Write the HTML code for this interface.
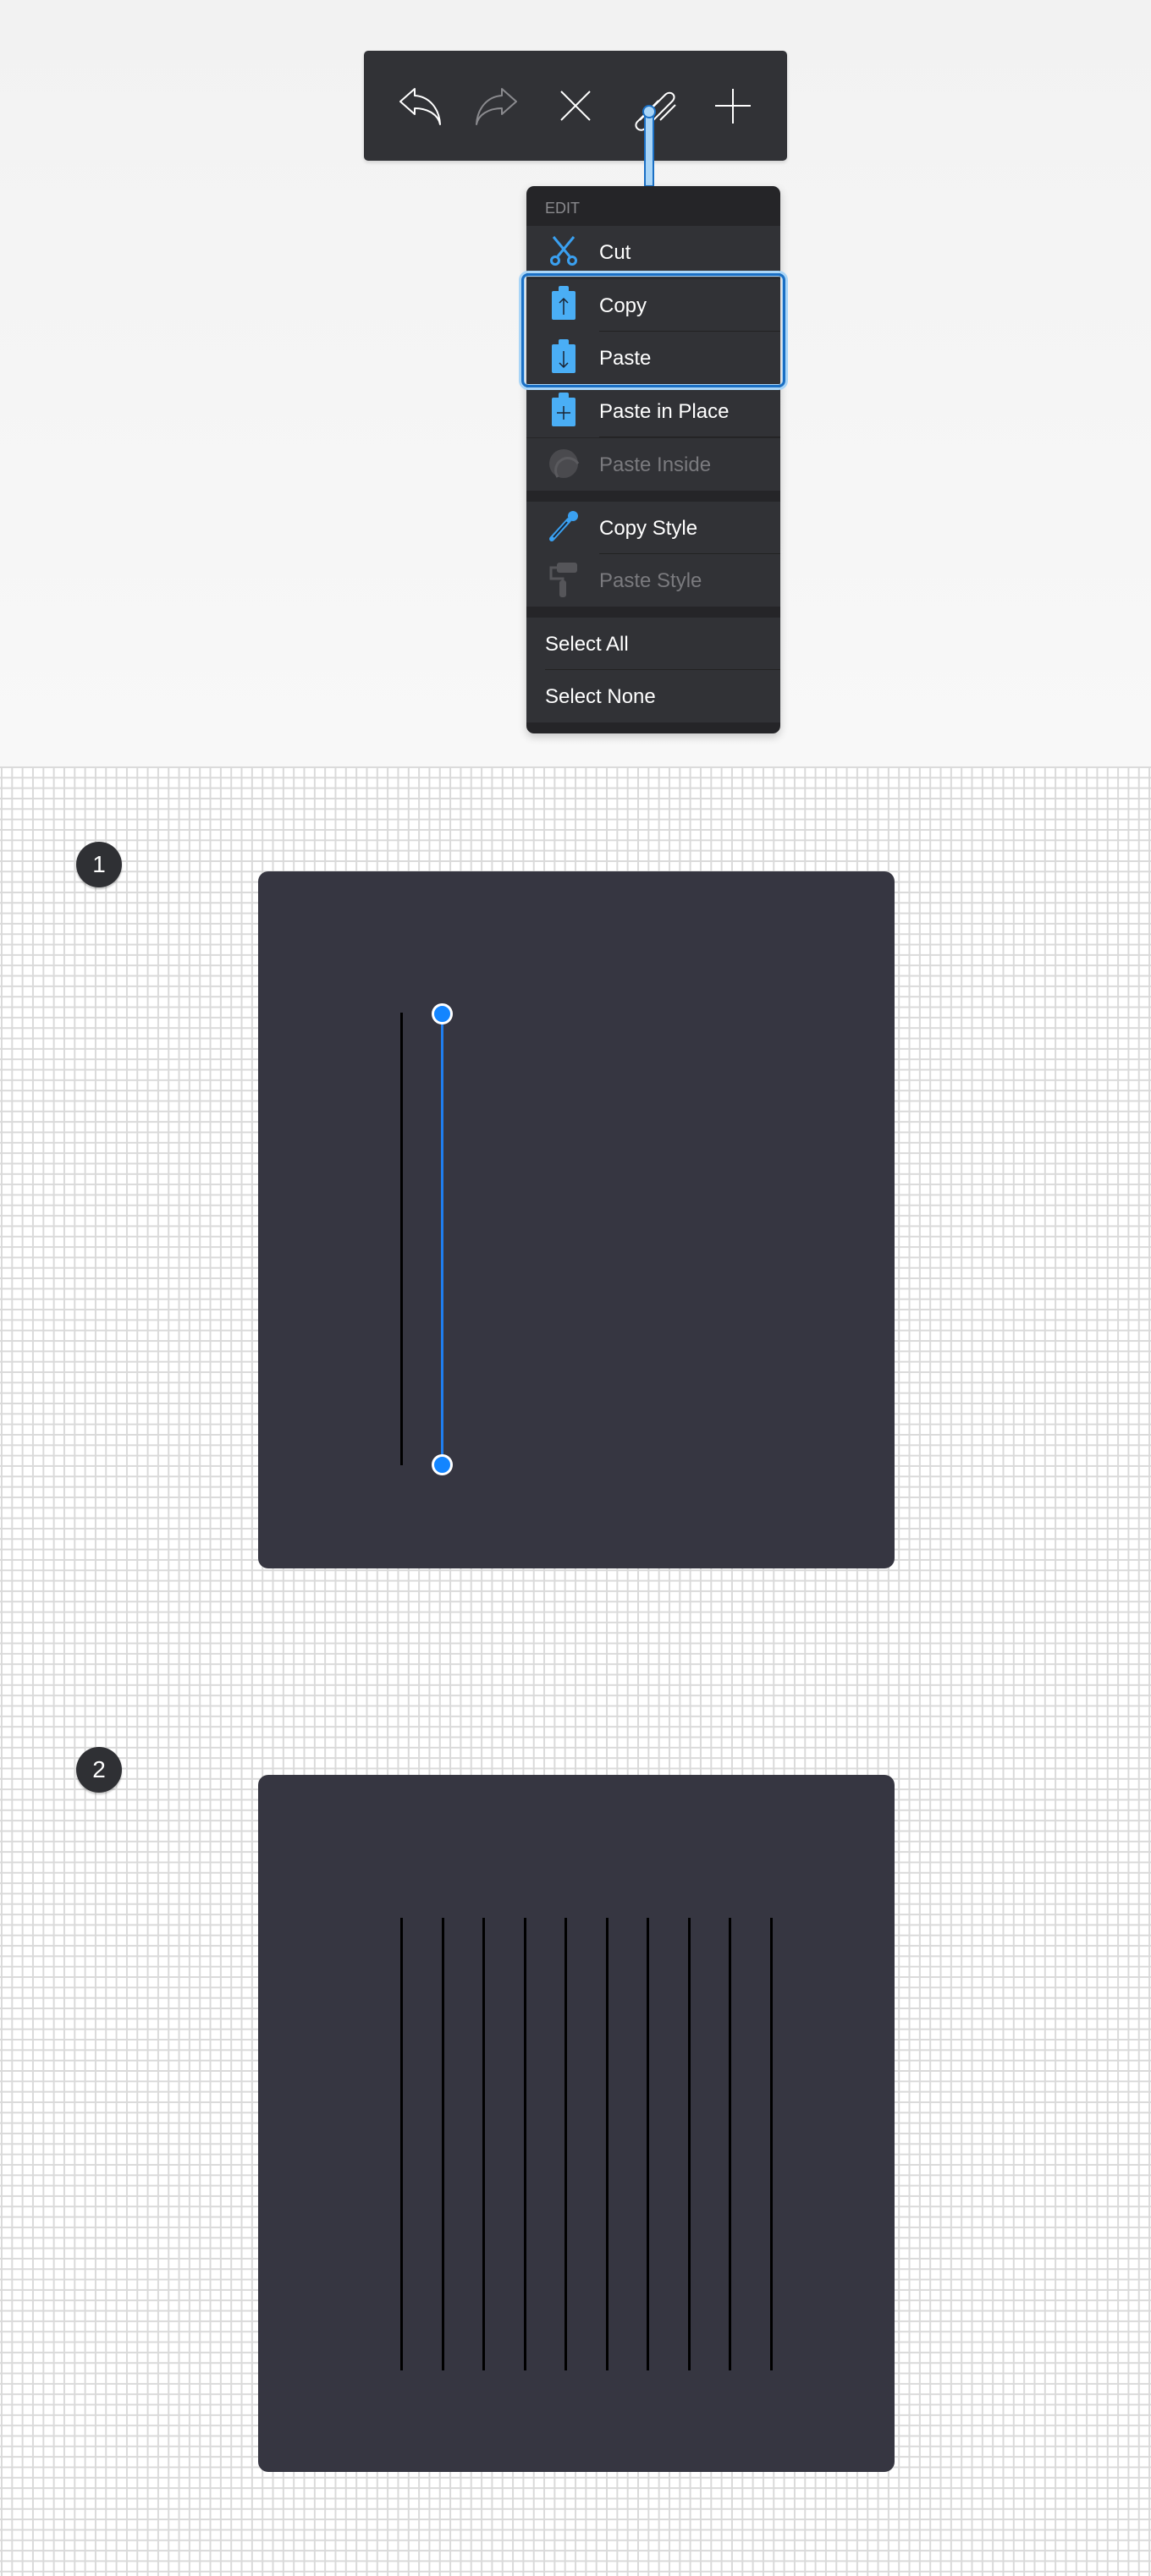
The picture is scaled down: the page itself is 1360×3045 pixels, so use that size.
<!DOCTYPE html>
<html><head><meta charset="utf-8"><style>
*{margin:0;padding:0;box-sizing:border-box}
body{width:1360px;height:3045px;position:relative;overflow:hidden;font-family:"Liberation Sans",sans-serif;background:#f4f4f4}
.top{position:absolute;left:0;top:0;width:1360px;height:906px;background:linear-gradient(#f2f2f2,#f8f8f8)}
.grid{position:absolute;left:0;top:906px;width:1360px;height:2139px;background-color:#fff;
background-image:linear-gradient(90deg,#dadada 2px,transparent 2px),linear-gradient(#dadada 2px,transparent 2px);
background-size:12.33px 12.33px;background-position:1px 0}
.tb{position:absolute;left:430px;top:60px;width:500px;height:130px;background:#313236;border-radius:5px;box-shadow:0 2px 4px rgba(0,0,0,.15)}
.menu{position:absolute;left:622px;top:220px;width:300px;height:647px;background:#252528;border-radius:9px;overflow:hidden;box-shadow:0 4px 10px rgba(0,0,0,.2)}
.hd{height:47px;color:#8a8a8e;font-size:18px;padding:16px 0 0 22px}
.row{position:absolute;left:0;width:300px;height:62px;background:#313236;color:#fff;font-size:24px}
.row span{position:absolute;left:86px;top:18px}
.row.dim{color:#7a7a7e}
.row .ln{position:absolute;left:86px;right:0;bottom:0;height:1px;background:#222}
.row.s span{left:22px}.row.s .ln{left:22px}
.hl{position:absolute;left:616px;top:323px;width:312px;height:135px;border:3px solid #1a6fc4;border-radius:8px;box-shadow:0 0 0 3px #a9d5f7,inset 0 0 0 1px #a9d5f7}
.badge{position:absolute;width:54px;height:54px;border-radius:50%;background:#2f3034;color:#fff;font-size:28px;text-align:center;line-height:54px;box-shadow:0 2px 2px rgba(0,0,0,.25)}
.card{position:absolute;left:305px;width:752px;height:824px;background:#363641;border-radius:12px}
.bl{position:absolute;width:3px;background:#000}
</style></head><body>
<div class="top"></div>
<div class="grid"></div>

<div class="tb"></div>
<svg style="position:absolute;left:430px;top:60px" width="500" height="130" viewBox="0 0 500 130" fill="none">
<path d="M60 45 L43 60 L60 75 L60 68 C76 68 88 76 90 87 C89 68 77 54 60 53 Z" stroke="#fff" stroke-width="2" stroke-linejoin="round"/>
<path d="M163 45 L180 60 L163 75 L163 68 C147 68 135 76 133 87 C134 68 146 54 163 53 Z" stroke="#8a8a8e" stroke-width="2" stroke-linejoin="round"/>
<path d="M233 48 L267 82 M267 48 L233 82" stroke="#fff" stroke-width="2"/>
<path d="M326 82 L356 52 C362 46 371 53 364 60 L332 92 C326 97 318 90 323 84 L348 59" stroke="#fff" stroke-width="2"/>
<path d="M368 64 L350 82" stroke="#fff" stroke-width="2"/>
<path d="M415 65 L457 65 M436 45 L436 86" stroke="#fff" stroke-width="2"/>
</svg>
<div style="position:absolute;left:761px;top:133px;width:12px;height:88px;background:#a9d5f7;border:2px solid #1a6fc4;border-top:none"></div>
<div style="position:absolute;left:759px;top:124px;width:16px;height:16px;border-radius:50%;background:#a9d5f7;border:2px solid #1a6fc4"></div>

<div class="menu">
<div class="hd">EDIT</div>
<div class="row" style="top:47px"><span>Cut</span></div>
<div class="row" style="top:110px"><span>Copy</span><div class="ln"></div></div>
<div class="row" style="top:172px"><span>Paste</span></div>
<div class="row" style="top:235px"><span>Paste in Place</span><div class="ln"></div></div>
<div class="row dim" style="top:298px"><span>Paste Inside</span></div>
<div class="row" style="top:373px"><span>Copy Style</span><div class="ln"></div></div>
<div class="row dim" style="top:435px"><span>Paste Style</span></div>
<div class="row s" style="top:510px"><span>Select All</span><div class="ln"></div></div>
<div class="row s" style="top:572px"><span>Select None</span></div>
<svg style="position:absolute;left:0;top:0" width="300" height="647" fill="none">
<g stroke="#3aa0f0" stroke-width="3"><path d="M32 60 L51 83 M56 60 L37 83"/><circle cx="34" cy="88" r="4.5"/><circle cx="54" cy="88" r="4.5"/></g>
<g fill="#4aaef5"><rect x="30" y="124" width="28" height="34" rx="2"/><rect x="38" y="118" width="12" height="8" rx="2"/>
<rect x="30" y="187" width="28" height="34" rx="2"/><rect x="38" y="181" width="12" height="8" rx="2"/>
<rect x="30" y="250" width="28" height="34" rx="2"/><rect x="38" y="244" width="12" height="8" rx="2"/></g>
<g stroke="#1a2433" stroke-width="1.5"><path d="M44 152 V133 M39 138 L44 133 L49 138"/><path d="M44 195 V214 M39 209 L44 214 L49 209"/><path d="M36 268 H52 M44 260 V276"/></g>
<circle cx="44" cy="328" r="17" fill="#4a4a4e"/><path d="M37 344 A14 14 0 0 1 61 328" stroke="#5a5a5e" stroke-width="3"/>
<path d="M30 417 L50 395" stroke="#3aa0f0" stroke-width="6" stroke-linecap="round"/><path d="M32 415 L48 397" stroke="#1a2433" stroke-width="2"/><circle cx="55" cy="390" r="6" fill="#3aa0f0"/>
<rect x="36" y="445" width="24" height="12" rx="3" fill="#555559"/><path d="M36 451 H29 V464 H43 V478" stroke="#555559" stroke-width="3"/><rect x="39" y="466" width="8" height="20" rx="3" fill="#555559"/>
</svg>
</div>
<div class="hl"></div>

<div class="badge" style="left:90px;top:995px">1</div>
<div class="card" style="top:1030px"></div>
<div class="bl" style="left:473px;top:1197px;height:535px"></div>
<div style="position:absolute;left:521px;top:1198px;width:3px;height:533px;background:#1f7ef0"></div>
<div style="position:absolute;left:510px;top:1186px;width:25px;height:25px;border-radius:50%;background:#1385ff;border:3px solid #fff"></div>
<div style="position:absolute;left:510px;top:1719px;width:25px;height:25px;border-radius:50%;background:#1385ff;border:3px solid #fff"></div>

<div class="badge" style="left:90px;top:2065px">2</div>
<div class="card" style="top:2098px"></div>
<div class="bl" style="left:473px;top:2267px;height:535px"></div>
<div class="bl" style="left:522px;top:2267px;height:535px"></div>
<div class="bl" style="left:570px;top:2267px;height:535px"></div>
<div class="bl" style="left:619px;top:2267px;height:535px"></div>
<div class="bl" style="left:667px;top:2267px;height:535px"></div>
<div class="bl" style="left:716px;top:2267px;height:535px"></div>
<div class="bl" style="left:764px;top:2267px;height:535px"></div>
<div class="bl" style="left:813px;top:2267px;height:535px"></div>
<div class="bl" style="left:861px;top:2267px;height:535px"></div>
<div class="bl" style="left:910px;top:2267px;height:535px"></div>
</body></html>
